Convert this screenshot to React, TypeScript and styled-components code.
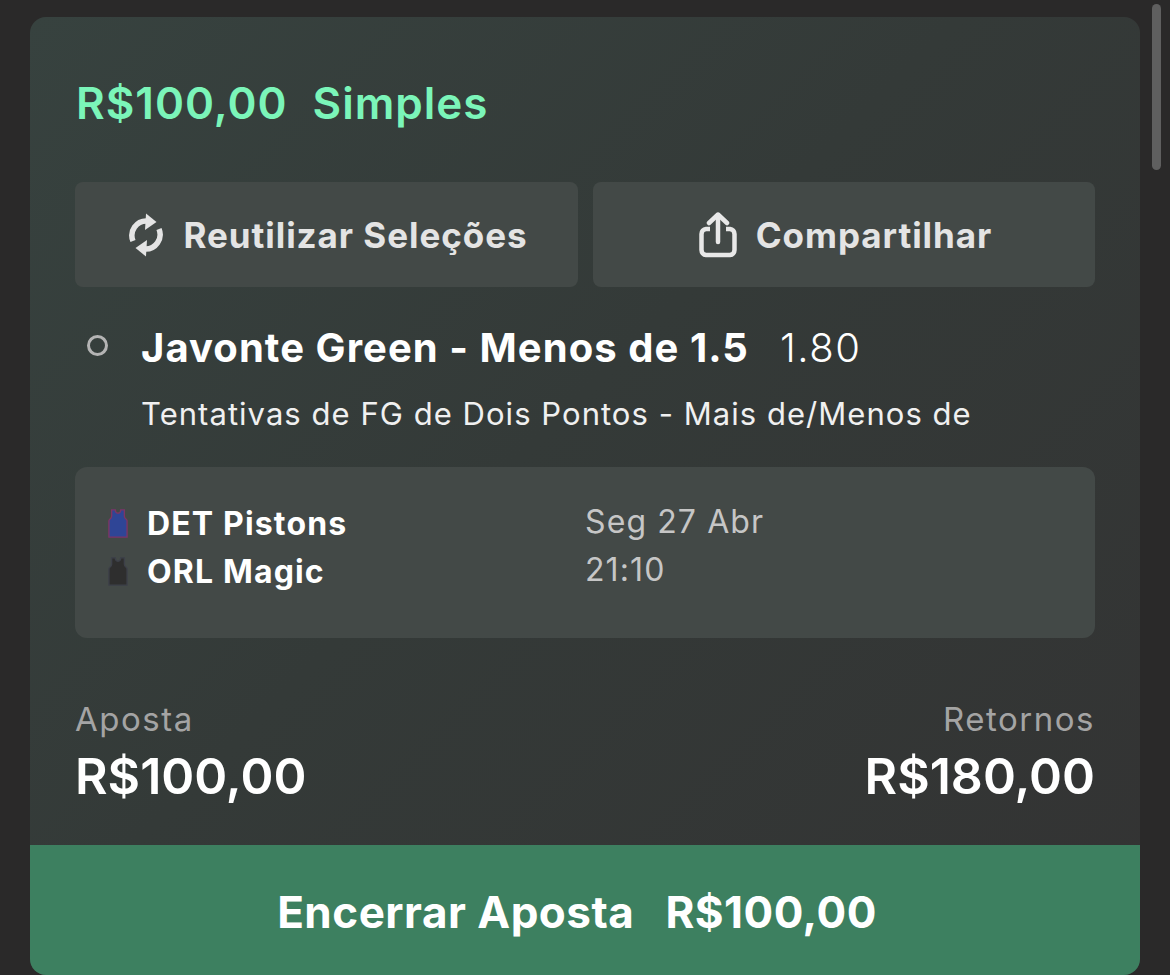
import styled, { createGlobalStyle } from 'styled-components';

const GlobalStyle = createGlobalStyle`
  html, body {
    margin: 0;
    padding: 0;
    height: 975px;
    overflow: hidden;
    background: #2a2929;
  }

  * {
    box-sizing: border-box;
  }
`;

const RefreshIcon = () => (
  <svg width="36" height="44" viewBox="0 0 36 44" fill="none">
    <path d="M5 28 A14.5 14.5 0 0 1 19 8" stroke="#e4e4e4" strokeWidth="5.5" />
    <path d="M18 0.5 L28.5 9 L17 17 Z" fill="#e4e4e4" />
    <path d="M31 16 A14.5 14.5 0 0 1 17 36" stroke="#e4e4e4" strokeWidth="5.5" />
    <path d="M18 43.5 L7.5 35 L19 27 Z" fill="#e4e4e4" />
  </svg>
);

const ShareIcon = () => (
  <svg width="38" height="46" viewBox="0 0 38 46" fill="none" stroke="#e8e8e8" strokeWidth="4.5">
    <path d="M11 17 H7 A5 5 0 0 0 2.5 22 V38 A5 5 0 0 0 7 43 H31 A5 5 0 0 0 35.5 38 V22 A5 5 0 0 0 31 17 H27" />
    <path d="M19 30 V3" strokeLinecap="round" />
    <path d="M10 11 L19 2.5 L28 11" strokeLinecap="round" strokeLinejoin="round" />
  </svg>
);

const Jersey = ({ body, trim }: { body: string; trim: string }) => (
  <svg width="20" height="31" viewBox="0 0 22 32">
    <path
      d="M4 1 H8 C8 6 14 6 14 1 H18 V8 C18 11 21 11 21 13 V31 H1 V13 C1 11 4 11 4 8 Z"
      fill={body}
      stroke={trim}
      strokeWidth="1.5"
    />
  </svg>
);

const App = () => {
  return (
    <>
      <GlobalStyle />
      <Page>
        <Card>
          <CardBody>
            <Heading>
              <span>R$100,00</span>
              <span>Simples</span>
            </Heading>
            <ActionRow>
              <ActionButton>
                <RefreshIcon />
                Reutilizar Seleções
              </ActionButton>
              <ActionButton>
                <ShareIcon />
                Compartilhar
              </ActionButton>
            </ActionRow>
            <Selection>
              <Bullet />
              <SelectionText>
                <SelectionTitle>
                  <strong>Javonte Green - Menos de 1.5</strong>
                  <span>1.80</span>
                </SelectionTitle>
                <Market>Tentativas de FG de Dois Pontos - Mais de/Menos de</Market>
              </SelectionText>
            </Selection>
            <Fixture>
              <Teams>
                <Team>
                  <Jersey body="#2f4596" trim="#7d3565" />
                  DET Pistons
                </Team>
                <Team>
                  <Jersey body="#2e2e2e" trim="#3d4049" />
                  ORL Magic
                </Team>
              </Teams>
              <KickOff>
                <span>Seg 27 Abr</span>
                <span>21:10</span>
              </KickOff>
            </Fixture>
            <Totals>
              <TotalColumn>
                <TotalLabel>Aposta</TotalLabel>
                <TotalValue>R$100,00</TotalValue>
              </TotalColumn>
              <TotalColumn $right>
                <TotalLabel>Retornos</TotalLabel>
                <TotalValue>R$180,00</TotalValue>
              </TotalColumn>
            </Totals>
          </CardBody>
          <CashOut>
            <span>Encerrar Aposta</span>
            <span>R$100,00</span>
          </CashOut>
        </Card>
        <ScrollThumb />
      </Page>
    </>
  );
};

const Page = styled.div`
  height: 975px;
  padding: 17px 30px 0;
  font-family: Inter, 'Liberation Sans', sans-serif;
`;

const Card = styled.div`
  display: flex;
  flex-direction: column;
  height: 958px;
  overflow: hidden;
  border-radius: 16px;
  background: linear-gradient(135deg, #37423f 0%, #343a38 45%, #333333 100%);
`;

const CardBody = styled.div`
  flex: 1;
  padding: 57px 45px 0;
`;

const Heading = styled.div`
  display: flex;
  gap: 25px;
  height: 58px;
  margin-left: 1px;
  align-items: center;
  color: #7bf5b9;
  font-size: 44px;
  font-weight: 600;
  letter-spacing: 1px;
`;

const ActionRow = styled.div`
  display: grid;
  grid-template-columns: 503px 502px;
  gap: 15px;
  margin-top: 50px;
`;

const ActionButton = styled.div`
  display: flex;
  gap: 19px;
  height: 105px;
  padding-left: 3px;
  align-items: center;
  justify-content: center;
  border-radius: 8px;
  background: #434947;
  color: #e4e4e4;
  font-size: 35px;
  font-weight: 700;
  letter-spacing: 0.95px;
`;

const Selection = styled.div`
  display: flex;
  margin-top: 34px;
`;

const Bullet = styled.div`
  width: 21px;
  height: 21px;
  margin: 14px 33px 0 12px;
  border: 3px solid #b4b4b4;
  border-radius: 50%;
`;

const SelectionText = styled.div`
  display: flex;
  flex-direction: column;
`;

const SelectionTitle = styled.div`
  display: flex;
  gap: 31px;
  height: 52px;
  align-items: center;
  color: #ffffff;
  font-size: 40px;

  strong {
    font-weight: 700;
    letter-spacing: 1.05px;
  }

  span {
    font-weight: 300;
    letter-spacing: 1.6px;
  }
`;

const Market = styled.div`
  margin-top: 21px;
  color: #f0f0f0;
  font-size: 31px;
  font-weight: 400;
  line-height: 40px;
  letter-spacing: 1.04px;
`;

const Fixture = styled.div`
  display: flex;
  height: 171px;
  margin-top: 33px;
  padding-top: 32px;
  border-radius: 12px;
  background: #434947;
`;

const Teams = styled.div`
  width: 510px;
  padding-left: 33px;
`;

const Team = styled.div`
  display: flex;
  gap: 19px;
  height: 48px;
  align-items: center;
  color: #ffffff;
  font-size: 32px;
  font-weight: 700;
  letter-spacing: 1.15px;
`;

const KickOff = styled.div`
  display: flex;
  flex-direction: column;
  margin-top: -1px;
  color: #c6c6c6;
  font-size: 32px;
  line-height: 48px;
  letter-spacing: 1.1px;
`;

const Totals = styled.div`
  display: flex;
  justify-content: space-between;
  margin-top: 59px;
`;

const TotalColumn = styled.div<{ $right?: boolean }>`
  display: flex;
  flex-direction: column;
  gap: 5px;
  align-items: ${({ $right }) => ($right ? 'flex-end' : 'flex-start')};
`;

const TotalLabel = styled.div`
  color: #a4a4a4;
  font-size: 33px;
  line-height: 44px;
  letter-spacing: 1.5px;
`;

const TotalValue = styled.div`
  color: #ffffff;
  font-size: 50px;
  font-weight: 600;
  line-height: 60px;
`;

const CashOut = styled.div`
  display: flex;
  gap: 31px;
  height: 130px;
  flex-shrink: 0;
  align-items: center;
  justify-content: center;
  padding: 3px 16px 0 0;
  background: #3d8060;
  color: #ffffff;
  font-size: 44px;
  font-weight: 700;
  letter-spacing: 0.5px;
`;

const ScrollThumb = styled.div`
  position: fixed;
  top: 4px;
  left: 1152px;
  width: 9px;
  height: 166px;
  border-radius: 5px;
  background: #5f5f5f;
`;

Page.displayName = 'Page';
Card.displayName = 'Card';

export default App;
